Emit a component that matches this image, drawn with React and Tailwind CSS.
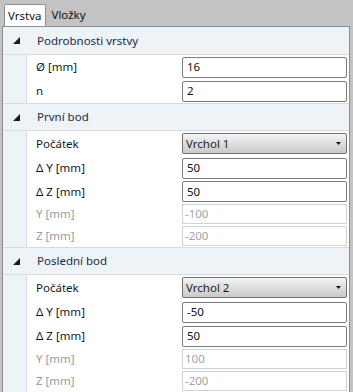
import React from "react";

const font = { fontFamily: '"Noto Sans", "Open Sans", sans-serif' };

const Expander = () => (
  <svg width="7" height="7" viewBox="0 0 7 7" className="block">
    <path d="M7 0 L7 7 L0 7 Z" fill="#1b1b1b" />
  </svg>
);

const Header = ({ title, first }) => (
  <div
    className={
      "flex h-[28px] items-center bg-[#eef3f8] border-b border-[#d6dbe2] " +
      (first ? "" : "border-t")
    }
  >
    <div className="w-[24px] flex justify-center pl-[2px]">
      <Expander />
    </div>
    <div className="pl-[10px] text-[11.5px] text-[#1c2a44]">{title}</div>
  </div>
);

const Row = ({ label, h, muted, children }) => (
  <div className={"flex items-center " + h}>
    <div className="w-[24px] self-stretch bg-[#eef3f8] border-r border-[#d6dbe2]" />
    <div
      className={
        "w-[155px] pl-[9px] text-[11.5px] " +
        (muted ? "text-[#9a9a9a]" : "text-[#111827]")
      }
    >
      {label}
    </div>
    <div className="w-[165px]">{children}</div>
  </div>
);

const Input = ({ value }) => (
  <div className="h-[21px] border border-[#7b7b7b] rounded-[2px] bg-white flex items-center pl-[4px] text-[11.5px] text-[#111]">
    {value}
  </div>
);

const ReadOnly = ({ value }) => (
  <div className="h-[20px] border border-[#d2d2d2] bg-white flex items-center pl-[2px] text-[11.5px] text-[#a3a3a3]">
    {value}
  </div>
);

const Combo = ({ value }) => (
  <div className="h-[21px] border border-[#707070] rounded-[2px] bg-linear-to-b from-[#f4f4f4] via-[#dedede] to-[#c9c9c9] flex items-center justify-between pl-[3px] pr-[5px] text-[11.5px] text-[#1a1a1a]">
    <span>{value}</span>
    <svg width="5" height="3" viewBox="0 0 5 3" className="block">
      <path d="M0 0 L5 0 L2.5 3 Z" fill="#111" />
    </svg>
  </div>
);

const Section = ({ title, first, children }) => (
  <div>
    <Header title={title} first={first} />
    {children}
  </div>
);

export default function App() {
  return (
    <div className="w-[353px] h-[392px] bg-[#c3c3c3] overflow-hidden" style={font}>
      <div className="h-[26px] flex items-end pl-[4px]">
        <div className="h-[22px] px-[3px] bg-white border border-b-0 border-[#8d8d8d] rounded-t-[2px] flex items-center text-[11.5px] text-[#111]">
          Vrstva
        </div>
        <div className="h-[22px] pl-[6px] flex items-center text-[11.5px] text-[#111]">
          Vložky
        </div>
      </div>
      <div className="ml-[2px] w-[348px] h-[380px] bg-white border border-b-0 border-[#8a8d94]">
        <Section title="Podrobnosti vrstvy" first>
          <Row label="Ø [mm]" h="h-[24px]">
            <Input value="16" />
          </Row>
          <Row label="n" h="h-[24px]">
            <Input value="2" />
          </Row>
        </Section>
        <Section title="První bod">
          <Row label="Počátek" h="h-[25px]">
            <Combo value="Vrchol 1" />
          </Row>
          <Row label="Δ Y [mm]" h="h-[24px]">
            <Input value="50" />
          </Row>
          <Row label="Δ Z [mm]" h="h-[23px]">
            <Input value="50" />
          </Row>
          <Row label="Y [mm]" h="h-[22px]" muted>
            <ReadOnly value="-100" />
          </Row>
          <Row label="Z [mm]" h="h-[22px]" muted>
            <ReadOnly value="-200" />
          </Row>
        </Section>
        <Section title="Poslední bod">
          <Row label="Počátek" h="h-[25px]">
            <Combo value="Vrchol 2" />
          </Row>
          <Row label="Δ Y [mm]" h="h-[24px]">
            <Input value="-50" />
          </Row>
          <Row label="Δ Z [mm]" h="h-[24px]">
            <Input value="50" />
          </Row>
          <Row label="Y [mm]" h="h-[22px]" muted>
            <ReadOnly value="100" />
          </Row>
          <Row label="Z [mm]" h="h-[22px]" muted>
            <ReadOnly value="-200" />
          </Row>
        </Section>
      </div>
    </div>
  );
}
